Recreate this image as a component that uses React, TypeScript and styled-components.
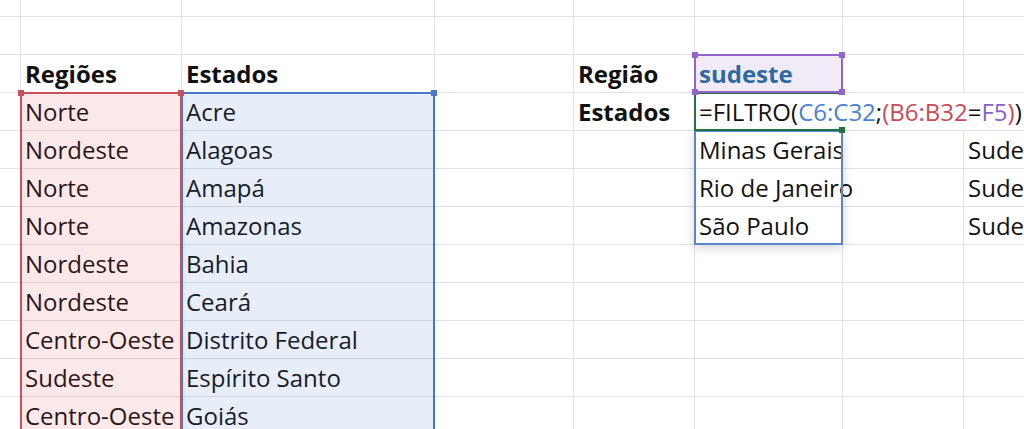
import React from "react";
import styled, { createGlobalStyle } from "styled-components";

const Global = createGlobalStyle`
  html, body { margin: 0; padding: 0; background: #ffffff; overflow: hidden; }
  body { font-family: "Open Sans", "Noto Sans", sans-serif; }
`;

const GRID = "#e1e1e1";

const Viewport = styled.div`
  width: 1024px;
  height: 429px;
  overflow: hidden;
`;

const Sheet = styled.div`
  display: grid;
  grid-template-columns: 21px 161px 253px 139px 121px 148px 121px 220px;
  grid-template-rows: 17px repeat(12, 38px);
  width: max-content;
  font-family: "Open Sans", "Noto Sans", sans-serif;
  font-size: 24px;
  color: #111111;
`;

const Cell = styled.div<{
  $r: number;
  $c: number;
  $bold?: boolean;
  $noRight?: boolean;
  $color?: string;
}>`
  grid-row: ${(p) => p.$r};
  grid-column: ${(p) => p.$c};
  box-sizing: border-box;
  display: flex;
  align-items: center;
  padding: 0 4px;
  border-right: 1px solid ${(p) => (p.$noRight ? "transparent" : GRID)};
  border-bottom: 1px solid ${GRID};
  white-space: nowrap;
  overflow: visible;
  min-width: 0;
  font-weight: ${(p) => (p.$bold ? 700 : 400)};
  color: ${(p) => p.$color ?? "#111111"};
`;

const Range = styled.div<{
  $col: string;
  $row: string;
  $border: string;
  $fill?: string;
  $shadow?: boolean;
  $openRight?: boolean;
}>`
  position: relative;
  box-sizing: border-box;
  grid-column: ${(p) => p.$col};
  grid-row: ${(p) => p.$row};
  margin: -1px 0 0 -1px;
  border: 2px solid ${(p) => p.$border};
  border-right-color: ${(p) => (p.$openRight ? "transparent" : p.$border)};
  background: ${(p) => p.$fill ?? "transparent"};
  box-shadow: ${(p) => (p.$shadow ? "0 3px 10px rgba(0,0,0,0.16)" : "none")};
  pointer-events: none;
`;

const Handle = styled.span<{ $color: string; $v: "top" | "bottom"; $h: "left" | "right" }>`
  position: absolute;
  width: 6px;
  height: 6px;
  background: ${(p) => p.$color};
  ${(p) => p.$v}: -4px;
  ${(p) => p.$h}: -4px;
`;

const Ref = styled.span<{ $tone: "blue" | "red" | "purple" | "plain" }>`
  color: ${(p) =>
    p.$tone === "blue"
      ? "#4a7fd4"
      : p.$tone === "red"
      ? "#cc4a55"
      : p.$tone === "purple"
      ? "#8d5fc8"
      : "#111111"};
`;

type CellDef = {
  text?: React.ReactNode;
  bold?: boolean;
  color?: string;
  noRight?: boolean;
};

const formula = (
  <>
    <Ref $tone="plain">=FILTRO(</Ref>
    <Ref $tone="blue">C6:C32</Ref>
    <Ref $tone="plain">;</Ref>
    <Ref $tone="red">(B6:B32</Ref>
    <Ref $tone="plain">=</Ref>
    <Ref $tone="purple">F5</Ref>
    <Ref $tone="red">)</Ref>
    <Ref $tone="plain">)</Ref>
  </>
);

const data: { b?: string; c?: string; e?: string; f?: React.ReactNode; h?: string; kind?: string }[] = [
  {},
  {},
  { b: "Regiões", c: "Estados", e: "Região", f: "sudeste", kind: "head" },
  { b: "Norte", c: "Acre", e: "Estados", f: formula, kind: "formula" },
  { b: "Nordeste", c: "Alagoas", f: "Minas Gerais", h: "Sudeste" },
  { b: "Norte", c: "Amapá", f: "Rio de Janeiro", h: "Sudeste", kind: "overflow" },
  { b: "Norte", c: "Amazonas", f: "São Paulo", h: "Sudeste" },
  { b: "Nordeste", c: "Bahia" },
  { b: "Nordeste", c: "Ceará" },
  { b: "Centro-Oeste", c: "Distrito Federal" },
  { b: "Sudeste", c: "Espírito Santo" },
  { b: "Centro-Oeste", c: "Goiás" },
  { b: "Norte", c: "Maranhão" },
];

function rowCells(r: (typeof data)[number]): CellDef[] {
  const head = r.kind === "head";
  const isFormula = r.kind === "formula";
  return [
    {},
    { text: r.b, bold: head },
    { text: r.c, bold: head },
    {},
    { text: r.e, bold: head || isFormula },
    {
      text: r.f,
      bold: head,
      color: head ? "#216c9c" : undefined,
      noRight: isFormula || r.kind === "overflow",
    },
    { noRight: isFormula },
    { text: r.h },
  ];
}

export default function App() {
  return (
    <>
      <Global />
      <Viewport>
        <Sheet>
          {data.map((r, ri) =>
            rowCells(r).map((c, ci) => (
              <Cell
                key={`${ri}-${ci}`}
                $r={ri + 1}
                $c={ci + 1}
                $bold={c.bold}
                $color={c.color}
                $noRight={c.noRight}
              >
                {c.text}
              </Cell>
            ))
          )}

          <Range $col="3" $row="4 / 14" $border="#4a78c8" $fill="rgba(68,114,196,0.12)">
            <Handle $color="#4a78c8" $v="top" $h="right" />
          </Range>
          <Range $col="2" $row="4 / 14" $border="#c9505c" $fill="rgba(220,70,80,0.12)">
            <Handle $color="#c9505c" $v="top" $h="left" />
            <Handle $color="#c9505c" $v="top" $h="right" />
          </Range>
          <Range $col="6" $row="5 / 8" $border="#5b86cc" $shadow />
          <Range $col="6" $row="4" $border="#217346" $openRight>
            <Handle $color="#217346" $v="bottom" $h="right" />
          </Range>
          <Range $col="6" $row="3" $border="#9464cc" $fill="rgba(142,94,201,0.12)">
            <Handle $color="#9464cc" $v="top" $h="left" />
            <Handle $color="#9464cc" $v="top" $h="right" />
            <Handle $color="#9464cc" $v="bottom" $h="left" />
            <Handle $color="#9464cc" $v="bottom" $h="right" />
          </Range>
        </Sheet>
      </Viewport>
    </>
  );
}
